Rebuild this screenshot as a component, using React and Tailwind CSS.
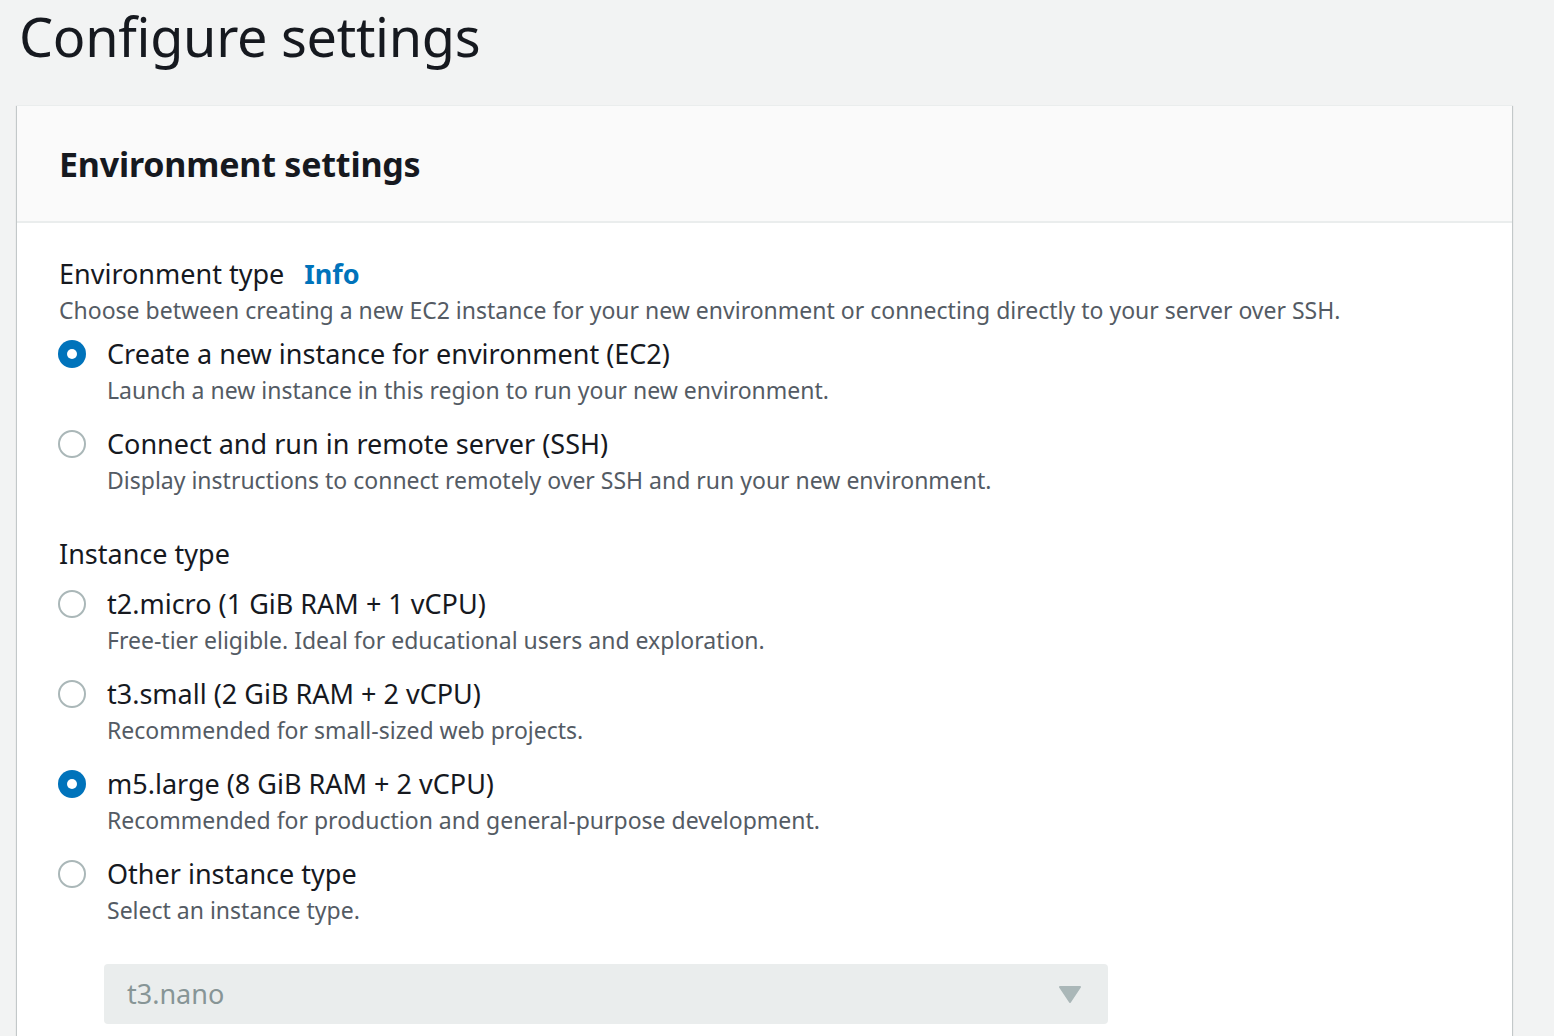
import { useState } from 'react'

const environmentOptions = [
  {
    id: 'ec2',
    label: 'Create a new instance for environment (EC2)',
    description: 'Launch a new instance in this region to run your new environment.',
  },
  {
    id: 'ssh',
    label: 'Connect and run in remote server (SSH)',
    description: 'Display instructions to connect remotely over SSH and run your new environment.',
  },
]

const instanceOptions = [
  {
    id: 't2.micro',
    label: 't2.micro (1 GiB RAM + 1 vCPU)',
    description: 'Free-tier eligible. Ideal for educational users and exploration.',
  },
  {
    id: 't3.small',
    label: 't3.small (2 GiB RAM + 2 vCPU)',
    description: 'Recommended for small-sized web projects.',
  },
  {
    id: 'm5.large',
    label: 'm5.large (8 GiB RAM + 2 vCPU)',
    description: 'Recommended for production and general-purpose development.',
  },
  {
    id: 'other',
    label: 'Other instance type',
    description: 'Select an instance type.',
  },
]

const RadioDot = ({ checked }) =>
  checked ? (
    <span className="flex h-[28px] w-[28px] items-center justify-center rounded-full bg-[#0073bb]">
      <span className="h-[10px] w-[10px] rounded-full bg-white" />
    </span>
  ) : (
    <span className="h-[28px] w-[28px] rounded-full border-2 border-[#aab7b8] bg-white" />
  )

const RadioOption = ({ option, checked, onSelect }) => (
  <label className="-ml-[1px] flex cursor-pointer items-start gap-[21px]" onClick={() => onSelect(option.id)}>
    <span className="flex h-[36px] shrink-0 items-center">
      <RadioDot checked={checked} />
    </span>
    <span className="flex flex-col">
      <span className="text-[27px] leading-[36px] text-[#16191f]">{option.label}</span>
      <span className="text-[23px] leading-[36px] text-[#545b64]">{option.description}</span>
    </span>
  </label>
)

const App = () => {
  const [envType, setEnvType] = useState('ec2')
  const [instanceType, setInstanceType] = useState('m5.large')

  return (
    <div
      className="min-h-[1036px] w-full overflow-hidden bg-[#f2f3f3] pl-[17px] pr-[42px] text-[#16191f]"
      style={{ fontFamily: '"Noto Sans", "Open Sans", Arial, sans-serif' }}
    >
      <h1 className="h-[105px] pl-[2px] text-[54px] leading-[72px] font-normal tracking-[-0.3px]">
        Configure settings
      </h1>

      <div className="bg-white shadow-[0_1px_1px_0_rgba(0,28,36,0.3),1px_1px_1px_0_rgba(0,28,36,0.15),-1px_1px_1px_0_rgba(0,28,36,0.15)] border-t border-[#eaeded]">
        <div className="flex h-[117px] items-center border-b-2 border-[#eaeded] bg-[#fafafa] px-[42px]">
          <h2 className="text-[34px] font-bold leading-[40px] tracking-[-0.2px]">Environment settings</h2>
        </div>

        <div className="px-[42px] pt-[33px] pb-[40px]">
          <div className="flex items-baseline gap-[20px]">
            <span className="text-[27px] leading-[36px]">Environment type</span>
            <a className="text-[27px] font-bold leading-[36px] text-[#0073bb]">Info</a>
          </div>
          <p className="text-[23px] leading-[36px] text-[#545b64]">
            Choose between creating a new EC2 instance for your new environment or connecting directly to your server over SSH.
          </p>
          <div className="mt-[8px] flex flex-col gap-[18px]">
            {environmentOptions.map((option) => (
              <RadioOption
                key={option.id}
                option={option}
                checked={envType === option.id}
                onSelect={setEnvType}
              />
            ))}
          </div>

          <div className="mt-[38px] text-[27px] leading-[36px]">Instance type</div>
          <div className="mt-[14px] flex flex-col gap-[18px]">
            {instanceOptions.map((option) => (
              <RadioOption
                key={option.id}
                option={option}
                checked={instanceType === option.id}
                onSelect={setInstanceType}
              />
            ))}
          </div>

          <div className="mt-[36px] pl-[45px]">
            <div className="flex h-[60px] w-[1004px] items-center justify-between rounded-[4px] bg-[#eaeded] pl-[23px] pr-[27px]">
              <span className="text-[27px] text-[#879596]">t3.nano</span>
              <svg width="22" height="17" viewBox="0 0 22 17">
                <path d="M1 1 L21 1 L11 16 Z" fill="#aab7b8" stroke="#aab7b8" strokeWidth="2" strokeLinejoin="round" />
              </svg>
            </div>
          </div>
        </div>
      </div>
    </div>
  )
}

export default App
